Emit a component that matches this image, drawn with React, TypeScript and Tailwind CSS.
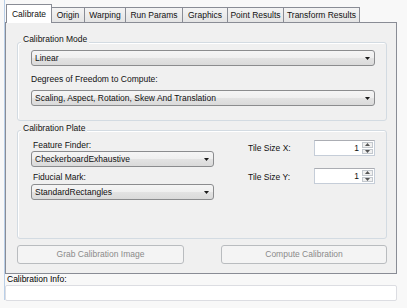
import React from "react";

function Arrow() {
  return (
    <svg width="5" height="3" viewBox="0 0 5 3" className="shrink-0">
      <path d="M0 0H5L2.5 3Z" fill="#1a1a1a" />
    </svg>
  );
}

function Combo({ text, w }: { text: string; w: string }) {
  return (
    <div
      className={`${w} h-[16px] rounded-[3px] border border-[#8b8c8e] bg-[linear-gradient(#f5f5f5,#efefef_50%,#e3e3e3_50%,#dadada)] flex items-center justify-between pl-[3px] pr-[4px] leading-[11px]`}
    >
      <span>{text}</span>
      <Arrow />
    </div>
  );
}

function Numeric() {
  return (
    <div className="w-[61px] h-[16px] border border-[#c5cdd8] border-t-[#abadb3] bg-white flex items-stretch">
      <div className="flex-1 flex items-center justify-end pr-[3px] leading-[11px]">1</div>
      <div className="w-[12px] flex flex-col gap-px py-px pr-px">
        <div className="flex-1 border border-[#c3c8ce] bg-[#f0f0f0] flex items-center justify-center">
          <svg width="5" height="3" viewBox="0 0 5 3"><path d="M0 3H5L2.5 0Z" fill="#555" /></svg>
        </div>
        <div className="flex-1 border border-[#c3c8ce] bg-[#f0f0f0] flex items-center justify-center">
          <svg width="5" height="3" viewBox="0 0 5 3"><path d="M0 0H5L2.5 3Z" fill="#555" /></svg>
        </div>
      </div>
    </div>
  );
}

export default function App() {
  return (
    <div className="w-[407px] h-[308px] bg-[#f8f8f8] flex font-['Liberation_Sans',Arial,sans-serif] text-[8.5px] text-[#111] overflow-hidden">
      <div className="w-[4px] shrink-0" />
      <div className="w-px h-[300px] bg-[#b9cfe8] shrink-0" />
      <div className="w-[392px] flex flex-col shrink-0">
        {/* tab strip */}
        <div className="h-[22px] flex items-end pl-px">
          <div className="relative z-10 -mb-px h-[19px] w-[46px] border border-b-0 border-[#898c95] bg-white flex items-center justify-center leading-[11px]">
            Calibrate
          </div>
          <div className="h-[15px] w-[33px] border-t border-r border-[#898c95] bg-linear-to-b from-[#f4f4f4] to-[#e4e4e4] flex items-center justify-center leading-[11px]">
            Origin
          </div>
          <div className="h-[15px] w-[41px] border-t border-r border-[#898c95] bg-linear-to-b from-[#f4f4f4] to-[#e4e4e4] flex items-center justify-center leading-[11px]">
            Warping
          </div>
          <div className="h-[15px] w-[57px] border-t border-r border-[#898c95] bg-linear-to-b from-[#f4f4f4] to-[#e4e4e4] flex items-center justify-center leading-[11px]">
            Run Params
          </div>
          <div className="h-[15px] w-[45px] border-t border-r border-[#898c95] bg-linear-to-b from-[#f4f4f4] to-[#e4e4e4] flex items-center justify-center leading-[11px]">
            Graphics
          </div>
          <div className="h-[15px] w-[56px] border-t border-r border-[#898c95] bg-linear-to-b from-[#f4f4f4] to-[#e4e4e4] flex items-center justify-center leading-[11px]">
            Point Results
          </div>
          <div className="h-[15px] w-[76px] border-t border-r border-[#898c95] bg-linear-to-b from-[#f4f4f4] to-[#e4e4e4] flex items-center justify-center leading-[11px]">
            Transform Results
          </div>
        </div>

        {/* tab page */}
        <div className="h-[252px] border border-[#898c95] bg-[#f0f0f0] flex flex-col pl-[11px] pr-[9px]">
          {/* group 1 */}
          <div className="relative mt-[19px] h-[79px] rounded-[3px] border border-[#d3dbe2] shadow-[inset_1px_1px_0_#ffffff] flex flex-col pl-[13px] pr-[10px] pt-[7px]">
            <span className="absolute left-[3px] top-[-9px] px-[2px] bg-[#f0f0f0] leading-[11px]">Calibration Mode</span>
            <Combo text="Linear" w="w-[344px]" />
            <div className="mt-[8px] leading-[11px]">Degrees of Freedom to Compute:</div>
            <div className="mt-[5px]">
              <Combo text="Scaling, Aspect, Rotation, Skew And Translation" w="w-[344px]" />
            </div>
          </div>

          {/* group 2 */}
          <div className="relative mt-[9px] h-[109px] rounded-[3px] border border-[#d3dbe2] shadow-[inset_1px_1px_0_#ffffff] flex pl-[13px] pt-[9px]">
            <span className="absolute left-[3px] top-[-8px] px-[2px] bg-[#f0f0f0] leading-[11px]">Calibration Plate</span>
            <div className="w-[183px] flex flex-col">
              <div className="pl-[2px] leading-[11px]">Feature Finder:</div>
              <Combo text="CheckerboardExhaustive" w="w-[183px]" />
              <div className="mt-[5px] pl-[2px] leading-[11px]">Fiducial Mark:</div>
              <div className="mt-px">
                <Combo text="StandardRectangles" w="w-[183px]" />
              </div>
            </div>
            <div className="ml-[34px] grid grid-cols-[66px_61px] grid-rows-[16px_16px] gap-y-[12px] items-center">
              <div className="leading-[11px]">Tile Size X:</div>
              <Numeric />
              <div className="leading-[11px] translate-y-[1px]">Tile Size Y:</div>
              <Numeric />
            </div>
          </div>

          {/* buttons */}
          <div className="mt-[6px] w-[370px] flex justify-between">
            <div className="w-[167px] h-[19px] rounded-[3px] border border-[#b9bcbf] bg-[#f4f4f4] flex items-center justify-center text-[#8a8a8a] leading-[11px]">
              Grab Calibration Image
            </div>
            <div className="w-[166px] h-[19px] rounded-[3px] border border-[#b9bcbf] bg-[#f4f4f4] flex items-center justify-center text-[#8a8a8a] leading-[11px]">
              Compute Calibration
            </div>
          </div>
        </div>

        {/* info */}
        <div className="h-[11px] pl-[2px] leading-[11px] text-black">Calibration Info:</div>
        <div className="h-[16px] rounded-[2px] border border-[#dcdde2] bg-white" />
      </div>
    </div>
  );
}
